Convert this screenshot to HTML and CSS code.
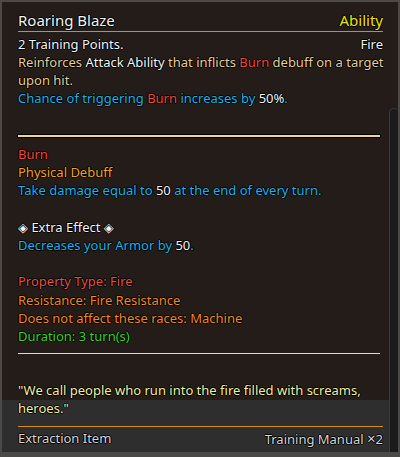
FILE: index.html
```html
<!DOCTYPE html>
<html lang="en">
<head>
  <meta charset="UTF-8">
  <title>Roaring Blaze - Tooltip</title>
  <link rel="stylesheet" href="styles.css">
</head>
<body>
  <div class="tooltip">
    <div class="head">
      <span class="title">Roaring Blaze</span>
      <span class="kind">Ability</span>
    </div>

    <div class="body">
      <div class="row">
        <span class="white">2 Training Points.</span>
        <span class="white">Fire</span>
      </div>
      <p class="tan">Reinforces <span class="white">Attack Ability</span> that inflicts <span class="red">Burn</span> debuff on a target upon hit.</p>
      <p class="cyan">Chance of triggering <span class="red">Burn</span> increases by <span class="white">50%</span>.</p>

      <hr class="gold">

      <p class="red">Burn</p>
      <p class="amber">Physical Debuff</p>
      <p class="cyan">Take damage equal to <span class="white">50</span> at the end of every turn.</p>
      <p class="gap"></p>
      <p class="white">◈ Extra Effect ◈</p>
      <p class="cyan">Decreases your Armor by <span class="white">50</span>.</p>
      <p class="gap"></p>
      <p class="salmon">Property Type: Fire</p>
      <p class="orange">Resistance: Fire Resistance</p>
      <p class="orange">Does not affect these races: Machine</p>
      <p class="green">Duration: 3 turn(s)</p>

      <hr class="thin">

      <p class="quote">"We call people who run into the fire filled with screams, heroes."</p>
    </div>

    <div class="foot">
      <div class="foot-row">
        <span>Extraction Item</span>
        <span>Training Manual <span class="times">×</span>2</span>
      </div>
    </div>

    <div class="scroll-thumb"></div>
  </div>
</body>
</html>
```

FILE: styles.css
```css
body {
  margin: 0;
  background: #1a1a1a;
}
.tooltip {
  position: relative;
  width: 400px;
  height: 457px;
  box-sizing: border-box;
  border: 2px solid #4d4946;
  border-bottom-width: 5px;
  background: #231c19;
  font-family: "Noto Sans", "DejaVu Sans", sans-serif;
  font-size: 13px;
  color: #f4f4f4;
  overflow: hidden;
  text-shadow: 1px 0 0 #000, -1px 0 0 #000, 0 1px 0 #000, 0 -1px 0 #000;
}
.head {
  display: flex;
  justify-content: space-between;
  align-items: center;
  margin: 0 15px 0 16px;
  padding-top: 7px;
  height: 22px;
  line-height: 22px;
  border-bottom: 1px solid #d9891d;
}
.title {
  font-size: 15px;
  color: #f6f6f6;
}
.kind {
  font-size: 15px;
  color: #f2e600;
}
.body {
  height: 368px;
  padding: 3px 13px 0 16px;
  box-sizing: border-box;
  line-height: 18px;
}
.body p {
  margin: 0;
}
.row {
  display: flex;
  justify-content: space-between;
  margin-right: 2px;
}
.gap {
  height: 18.2px;
}
hr.gold {
  border: 0;
  height: 2px;
  background: #f2d48e;
  box-shadow: 0 0 0 1px #000;
  margin: 28px 5px 8px 0;
}
.body hr.gold ~ p {
  line-height: 18.2px;
}
hr.thin {
  border: 0;
  height: 1px;
  background: #e6dcb4;
  margin: 8px 5px 27px 0;
}
.body p.quote {
  line-height: 18px;
  color: #f2f0a0;
}
.white { color: #f4f4f4; }
.tan { color: #e6cf96; }
.red { color: #f0493b; }
.cyan { color: #1cb4ec; }
.amber { color: #f0a61c; }
.salmon { color: #e8504a; }
.orange { color: #f08a22; }
.green { color: #38d428; }
.foot {
  height: 52px;
  background: #2e2e2e;
  padding: 26px 15px 0 16px;
  box-sizing: border-box;
}
.foot-row {
  display: flex;
  justify-content: space-between;
  border-top: 1px solid #d9891d;
  padding-top: 2px;
  line-height: 18px;
  color: #d6d6d6;
}
.times {
  font-size: 15px;
}
.scroll-thumb {
  position: absolute;
  left: 387px;
  top: 106px;
  width: 9px;
  bottom: 0;
  background: #1b1b1b;
  border-left: 1px solid #3a3a3a;
  border-top: 1px solid #3a3a3a;
  border-radius: 5px 5px 0 0;
}
```
